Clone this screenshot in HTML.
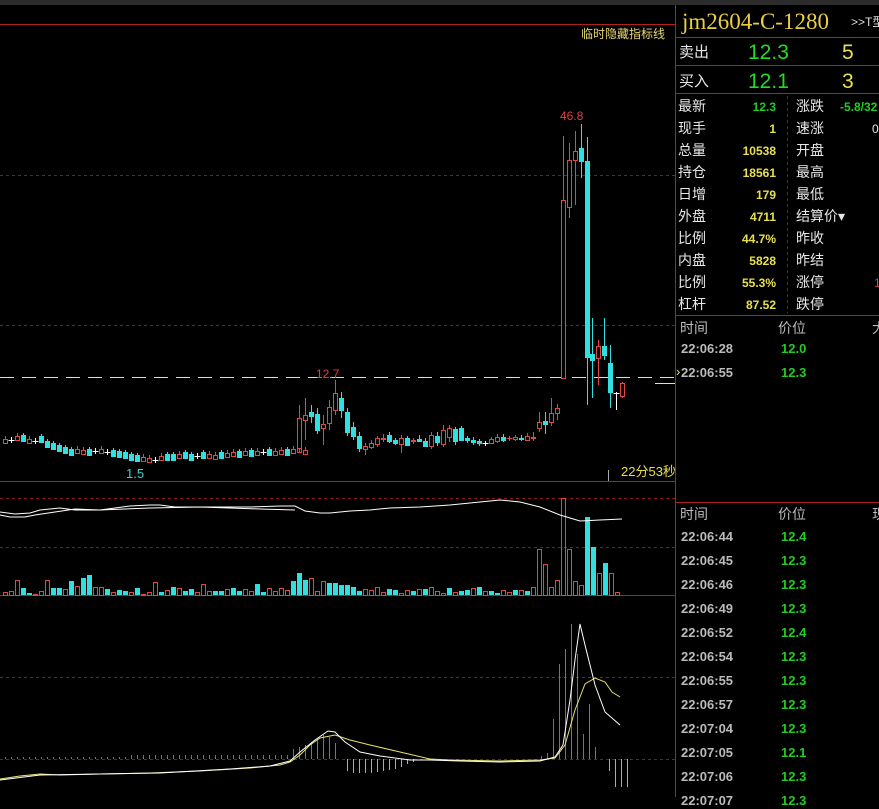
<!DOCTYPE html>
<html><head><meta charset="utf-8"><style>
html,body{margin:0;padding:0;background:#000;width:879px;height:797px;overflow:hidden;font-family:"Liberation Sans","Noto Sans CJK SC",sans-serif}
.t{position:absolute;white-space:nowrap;font-size:14px;line-height:16px}
.w{color:#e8e8e8}.g{color:#22cc22;font-weight:bold}.y{color:#e8e050;font-weight:bold}.gr{color:#bbb;font-weight:bold}
.r{text-align:right}
</style></head><body>
<div style="position:absolute;left:0;top:0;width:879px;height:5px;background:#2c2c2c"></div>
<svg id="s" width="879" height="797" style="position:absolute;left:0;top:0">
<g stroke="#b02020" stroke-width="1" fill="none">
<line x1="0" y1="24.5" x2="675" y2="24.5"/>
<line x1="675.5" y1="5" x2="675.5" y2="797"/>
<line x1="0" y1="481.5" x2="675" y2="481.5"/>
<line x1="0" y1="595.5" x2="675" y2="595.5"/>
<line x1="676" y1="37.5" x2="879" y2="37.5"/>
<line x1="676" y1="65.5" x2="879" y2="65.5"/>
<line x1="676" y1="93.5" x2="879" y2="93.5"/>
<line x1="676" y1="315.5" x2="879" y2="315.5"/>
<line x1="676" y1="502.5" x2="879" y2="502.5"/>
</g>
<g stroke="#8a1a1a" stroke-dasharray="3,3" fill="none">
<line x1="0" y1="175.5" x2="675" y2="175.5"/>
<line x1="0" y1="325.5" x2="675" y2="325.5"/>
<line x1="0" y1="498.5" x2="675" y2="498.5"/>
<line x1="0" y1="547.5" x2="675" y2="547.5"/>
<line x1="0" y1="677.5" x2="675" y2="677.5"/>
<line x1="0" y1="759.5" x2="675" y2="759.5"/>
<line x1="787.5" y1="96" x2="787.5" y2="313"/>
</g>
<line x1="0" y1="377.5" x2="675" y2="377.5" stroke="#ddd" stroke-dasharray="14,8"/>
<line x1="655" y1="383.5" x2="675" y2="383.5" stroke="#ddd"/>
<line x1="608.5" y1="470" x2="608.5" y2="481" stroke="#aaa"/>
<g id="c"></g>
</svg>
<div class="t" style="left:581px;top:26px;font-size:12px;color:#e8d870">临时隐藏指标线</div>
<div class="t" style="left:560px;top:108px;font-size:12px;color:#e04040">46.8</div>
<div class="t" style="left:316px;top:366px;font-size:12px;color:#e04040">12.7</div>
<div class="t" style="left:126px;top:466px;font-size:13px;color:#40d0d0">1.5</div>
<div class="t" style="left:621px;top:464px;font-size:13px;color:#e8e050">22分53秒</div>

<div class="t" style="left:682px;top:9px;font-size:23px;line-height:26px;color:#e8d040;font-family:'Liberation Serif',serif">jm2604-C-1280</div>
<div class="t" style="left:851px;top:14px;font-size:12px;color:#ddd">&gt;&gt;T型</div>
<div class="t w" style="left:679px;top:45px;font-size:15px">卖出</div>
<div class="t" style="left:748px;top:42px;font-size:21px;line-height:22px;color:#22dd22">12.3</div>
<div class="t" style="left:842px;top:42px;font-size:21px;line-height:22px;color:#e8e050">5</div>
<div class="t w" style="left:679px;top:74px;font-size:15px">买入</div>
<div class="t" style="left:748px;top:71px;font-size:21px;line-height:22px;color:#22dd22">12.1</div>
<div class="t" style="left:842px;top:71px;font-size:21px;line-height:22px;color:#e8e050">3</div>
<div id="rows"></div>

<div class="t" style="left:680px;top:320px;color:#bbb">时间</div>
<div class="t" style="left:778px;top:320px;color:#bbb">价位</div>
<div class="t" style="left:872px;top:320px;color:#bbb">大</div>
<div class="t gr" style="left:681px;top:341px;font-size:13px">22:06:28</div>
<div class="t g" style="left:781px;top:341px;font-size:13px">12.0</div>
<div class="t" style="left:676px;top:364px;font-size:13px;color:#e8e050">›</div>
<div class="t gr" style="left:681px;top:365px;font-size:13px">22:06:55</div>
<div class="t g" style="left:781px;top:365px;font-size:13px">12.3</div>
<div class="t" style="left:680px;top:506px;color:#bbb">时间</div>
<div class="t" style="left:778px;top:506px;color:#bbb">价位</div>
<div class="t" style="left:872px;top:506px;color:#bbb">现</div>
<div id="ticks"></div>
<script>
var rows=[["最新","12.3","g","涨跌"],["现手","1","y","速涨"],["总量","10538","y","开盘"],["持仓","18561","y","最高"],["日增","179","y","最低"],["外盘","4711","y","结算价▾"],["比例","44.7%","y","昨收"],["内盘","5828","y","昨结"],["比例","55.3%","y","涨停"],["杠杆","87.52","y","跌停"]];
var h="";rows.forEach(function(r,i){var y=98+i*22;h+='<div class="t w" style="left:678px;top:'+y+'px">'+r[0]+'</div><div class="t '+r[2]+' r" style="left:710px;width:66px;top:'+(y+1)+'px;font-size:12px">'+r[1]+'</div><div class="t w" style="left:796px;top:'+y+'px">'+r[3]+'</div>';});
h+='<div class="t g" style="left:840px;top:99px;font-size:12px">-5.8/32</div><div class="t w" style="left:872px;top:121px;font-size:12px">0</div><div class="t" style="left:874px;top:275px;font-size:12px;color:#e04040">1</div>';
document.getElementById("rows").innerHTML=h;
var tk=[["22:06:44","12.4"],["22:06:45","12.3"],["22:06:46","12.3"],["22:06:49","12.3"],["22:06:52","12.4"],["22:06:54","12.3"],["22:06:55","12.3"],["22:06:57","12.3"],["22:07:04","12.3"],["22:07:05","12.1"],["22:07:06","12.3"],["22:07:07","12.3"]];
h="";tk.forEach(function(r,i){var y=529+i*24;h+='<div class="t gr" style="left:681px;top:'+y+'px;font-size:13px">'+r[0]+'</div><div class="t g" style="left:781px;top:'+y+'px;font-size:13px">'+r[1]+'</div>';});
document.getElementById("ticks").innerHTML=h;
var R="#e04848",C="#30e0e0",W="#fff",s="";
function cd(x,o,c,hi,lo,col){var t=Math.min(o,c),b=Math.max(o,c);if(!col)col=c<o?R:(c>o?C:W);
s+='<line x1="'+(x+2.5)+'" y1="'+hi+'" x2="'+(x+2.5)+'" y2="'+lo+'" stroke="'+col+'"/>';
if(b-t<1)s+='<line x1="'+(x-0.5)+'" y1="'+(t+0.5)+'" x2="'+(x+5.5)+'" y2="'+(t+0.5)+'" stroke="'+col+'"/>';
else if(col==R)s+='<rect x="'+(x+0.5)+'" y="'+(t+0.5)+'" width="4" height="'+(b-t)+'" fill="#000" stroke="'+R+'"/>';
else s+='<rect x="'+x+'" y="'+t+'" width="5" height="'+(b-t+1)+'" fill="'+col+'"/>';}
var base=[441,440,438,438,441,441,439,444,446,448,450,452,451,452,452,451,451,452,453,454,455,457,458,459,460,460,458,457,457,456,455,457,456,455,456,457,455,455,454,454,453,453,453,452,452,453,452,452,451,450,452];
var dir=[1,0,1,-1,1,0,-1,-1,-1,-1,-1,-1,1,1,-1,0,1,0,-1,-1,-1,-1,-1,1,1,0,1,-1,-1,1,-1,-1,0,-1,1,1,-1,1,1,-1,1,-1,1,0,-1,1,1,-1,1,1,1];
for(var i=0;i<base.length;i++){var x=3+i*6,v=base[i],d=dir[i];
if(d>0)cd(x,v+2,v-2,v-5,v+3,R);else if(d<0)cd(x,v-3,v+3,v-5,v+4,C);else cd(x,v,v,v-3,v+3,W);}
var seg=[[297,448,418,405,452,R],[303,420,415,398,440,R],[309,416,412,405,423,C],[315,414,430,408,434,C],[321,428,424,415,445,R],[327,407,423,400,430,R],[333,393,410,380,415,R],[339,398,410,392,418,C],[345,412,432,408,436,C],[351,427,436,422,440,C],[357,436,448,432,452,C],[363,446,449,443,455,R],[369,443,447,440,449,R],[375,438,444,436,447,R],[381,438,439,434,442,R],[387,435,441,432,443,C],[393,440,443,438,445,C],[399,438,444,435,453,R],[405,438,445,436,446,C],[411,440,441,438,444,R],[417,439,441,435,442,C],[423,441,446,438,447,C],[429,435,446,432,449,R],[435,436,442,432,446,C],[441,430,444,425,447,R],[447,428,437,425,442,R],[453,429,441,427,445,C],[459,428,440,426,441,C],[465,438,440,436,443,C],[471,440,442,437,445,C],[477,441,443,439,446,C],[483,443,443,441,446,W],[489,439,443,437,444,R],[495,437,441,434,443,R],[501,437,440,434,442,C],[507,438,438,436,441,R],[513,437,439,435,441,R],[519,438,439,435,441,C],[525,436,440,433,441,R],[531,437,438,432,441,R],[537,422,428,412,432,R],[543,421,424,412,434,C],[549,413,422,398,426,R],[555,408,413,404,420,R],
[561,200,378,136,378,R],[567,160,207,143,218,R],[573,151,160,131,205,R],[579,148,161,124,178,C],[585,161,357,137,405,C],[590,354,360,318,398,C],[596,346,358,340,385,R],[602,346,355,318,360,C],[608,363,392,345,408,C],[614,393,393,392,410,W],[620,383,396,382,398,R]];
seg.forEach(function(a){var col=a[5];if(col==R)cd(a[0],a[2],a[1],a[3],a[4],R);else cd(a[0],a[1],a[2],a[3],a[4],col);});
var vh=[3,4,15,7,2,1,4,15,7,7,6,14,9,17,20,8,8,6,3,5,4,3,7,1,3,13,3,5,8,7,4,6,3,11,4,4,4,6,7,4,6,4,11,3,7,4,7,5,14,5,
22,15,17,4,14,12,12,10,10,8,4,6,5,8,3,6,5,2,5,4,6,6,8,4,2,7,3,4,5,7,8,4,4,2,5,3,5,5,4,8,7,7,5,4,6,8,4,3,3,3,
46,30,8,14,10,33,97,16,14,10,78,48,14,33,15,3];
var vc="RRRCCRRRCCRCRCCRRCRCCRCRRRCRCRCCRRRCCRCCRRCCRRRRCRCC RRRCCCCCCRRRRCCRRCRCRRRCRCCRCRCCRRCRCRRRCCRRCRCRRRCR".replace(/ /g,"");
for(i=0;i<vh.length;i++){var x=(i<50?3+i*6:(i<100?297+(i-50)*6:537+(i-100)*6)),hh=vh[i],col=vc[i]=="C"?C:R;
if(i>=100){var m=[[537,46,R],[543,31,R],[549,8,R],[555,15,R],[561,97,R],[567,46,R],[573,14,R],[579,10,R],[585,78,C],[591,48,C],[597,22,R],[603,32,C],[609,22,R],[615,3,R]];if(i-100<m.length){x=m[i-100][0];hh=m[i-100][1];col=m[i-100][2];}else continue;}
if(i>=50&&i<100&&x>532)continue;
if(col==R)s+='<rect x="'+(x+0.5)+'" y="'+(595-hh+0.5)+'" width="4" height="'+hh+'" fill="none" stroke="'+R+'"/>';else s+='<rect x="'+x+'" y="'+(595-hh)+'" width="5" height="'+hh+'" fill="'+C+'"/>';}
s+='<polyline fill="none" stroke="#fff" points="0,512 15,514 30,513 40,510 60,508 75,510 100,510 115,508 130,506 150,505 160,505 175,507 200,507 250,507 280,506 295,506 305,511 320,513 330,513 350,511 370,510 390,508 420,507 450,505 480,502 500,500 520,502 540,507 560,515 580,521 600,520 622,519"/>';
s+='<polyline fill="none" stroke="#fff" points="0,515 10,517 25,517 35,515 55,512 75,509 100,510 150,508 200,507 260,509 295,510"/>';
var mb="";for(x=5;x<290;x+=6){mb+='<line x1="'+(x+0.5)+'" y1="759" x2="'+(x+0.5)+'" y2="'+(759-(x>130?4+(x%18==0?2:0):2))+'" stroke="'+R+'"/>';}
s+=mb;
var hist=[[297,-10],[303,-12],[309,-14],[315,-17],[321,-20],[327,-24],[333,-22],[339,-16],[345,0],[351,12],[357,14],[363,14],[369,14],[375,14],[381,13],[387,12],[393,11],[399,10],[405,8],[411,5],[417,3],[545,-3],[551,-6],[557,-40],[563,-95],[569,-110],[575,-135],[581,-105],[587,-25],[593,-55],[599,-12],[605,0],[611,12],[617,28],[623,28],[629,28]];
hist.forEach(function(a){var x=a[0]-3.5;if(a[0]>=605)x=a[0]-1.5;s+='<line x1="'+x+'" y1="759" x2="'+x+'" y2="'+(759+a[1])+'" stroke="'+(a[1]<0?R:C)+'"/>';});
s+='<polyline fill="none" stroke="#e8e070" points="0,779 20,776 40,774 60,775 100,774 150,773 200,771 250,768 280,765 290,762 300,755 310,745 320,738 335,735 350,740 370,745 400,752 430,759 450,760 500,761 540,760 555,758 565,745 575,710 585,684 595,678 605,682 612,692 620,697"/>';
s+='<polyline fill="none" stroke="#fff" points="0,780 40,775 100,774 160,773 230,769 270,766 290,761 300,752 315,740 328,731 335,732 345,742 360,752 380,756 410,760 430,760 460,761 500,762 540,761 555,757 563,745 570,700 575,660 580,624 585,645 595,685 605,712 620,725"/>';
document.getElementById("c").innerHTML=s;
</script>
</body></html>
